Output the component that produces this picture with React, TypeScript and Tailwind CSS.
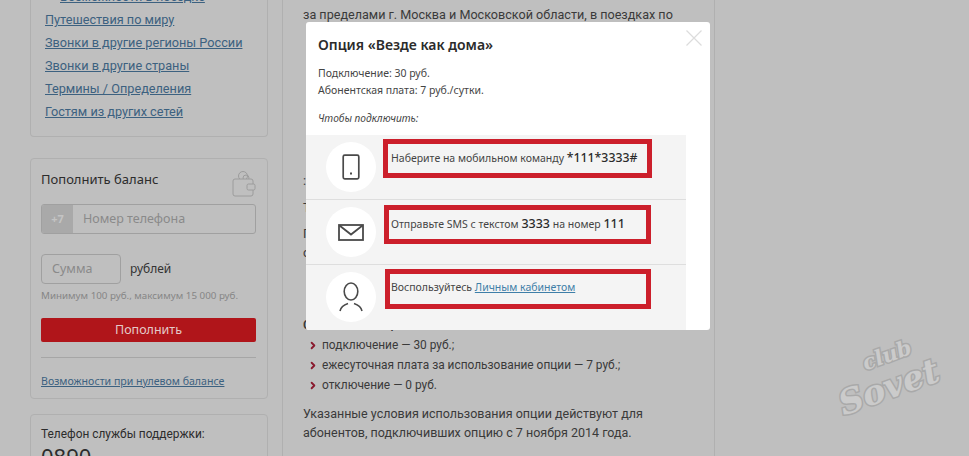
import { ChevronRight } from 'lucide-react';

const sideLinks = ['Путешествия по миру', 'Звонки в другие регионы России', 'Звонки в другие страны', 'Термины / Определения', 'Гостям из других сетей'];
const prices = ['подключение — 30 руб.;', 'ежесуточная плата за использование опции — 7 руб.;', 'отключение — 0 руб.'];

function WalletIcon() {
  return (
    <svg width="24" height="28" viewBox="0 0 24 28" fill="none" stroke="#9c9c9c" strokeWidth="1">
      <circle cx="11" cy="7" r="4.5" />
      <circle cx="14" cy="9" r="3" />
      <rect x="1" y="10" width="20" height="17" rx="2" fill="#bfbfbf" />
      <rect x="15" y="15" width="8" height="6" rx="1.5" fill="#bfbfbf" />
    </svg>
  );
}

function PhoneIcon() {
  return (
    <svg width="18" height="26" viewBox="0 0 18 26" fill="none">
      <rect x="1.2" y="1.2" width="15.6" height="23.6" rx="1.5" stroke="#4a4a4a" strokeWidth="1.7" />
      <rect x="8" y="18.5" width="2" height="2" fill="#4a4a4a" />
    </svg>
  );
}

function MailIcon() {
  return (
    <svg width="26" height="17" viewBox="0 0 26 17" fill="none" stroke="#4a4a4a" strokeWidth="1.8">
      <rect x="1" y="1" width="24" height="15" />
      <path d="M1.5 1.5 L13 10.5 L24.5 1.5" />
    </svg>
  );
}

function PersonIcon() {
  return (
    <svg width="24" height="30" viewBox="0 0 24 30" fill="none" stroke="#4a4a4a" strokeWidth="1.6">
      <ellipse cx="12" cy="9.5" rx="6.8" ry="8.5" />
      <path d="M1 29 C2 24 6 22.5 9 21.5 M23 29 C22 24 18 22.5 15 21.5" />
    </svg>
  );
}

export default function App() {
  return (
    <div className="relative flex h-[456px] w-[969px] overflow-hidden bg-[#bfbfbf] pl-[30px] font-['Noto_Sans',sans-serif] text-[#333]">
      {/* Sidebar */}
      <aside className="w-[238px] shrink-0">
        <div className="-mt-[15px] h-[152px] rounded-b-sm border border-t-0 border-[#b0b0b0] pl-[14px] font-['Roboto',sans-serif] text-[12.7px] leading-[23px] text-[#3c6180]">
          <a className="ml-[15px] block underline">Возможности в поездке</a>
          {sideLinks.map((link) => (
            <a key={link} className="block underline">{link}</a>
          ))}
        </div>

        <div className="mt-[21px] h-[241px] rounded-sm border border-[#b0b0b0] pt-[10px] pr-[11px] pl-[10px]">
          <div className="flex h-[35px] items-start justify-between">
            <span className="text-[13px] leading-[20px] text-[#2c2c2c]">Пополнить баланс</span>
            <WalletIcon />
          </div>
          <div className="flex h-[30px] overflow-hidden rounded-[3px] border border-[#a0a0a0] text-[12.5px] text-[#8a8a8a]">
            <span className="flex w-[31px] items-center justify-center bg-[#a9a9a9] text-[11px] font-bold text-[#c4c4c4]">+7</span>
            <span className="flex items-center pl-[10px]">Номер телефона</span>
          </div>
          <div className="mt-[20px] flex items-center">
            <span className="flex h-[30px] w-[80px] items-center rounded-[4px] border border-[#a0a0a0] pl-[10px] text-[12.5px] text-[#8a8a8a]">Сумма</span>
            <span className="ml-[9px] text-[12px] text-[#333]">рублей</span>
          </div>
          <p className="mt-[4px] text-[9.8px] leading-[16px] whitespace-nowrap text-[#868686]">Минимум 100 руб., максимум 15 000 руб.</p>
          <button className="mt-[14px] block h-[24px] w-full rounded-[2px] bg-[#b0151a] text-[12.5px] text-[#e4c9c9]">Пополнить</button>
          <div className="mt-[15px] border-t border-[#a6a6a6]" />
          <a className="mt-[15px] block text-[10.6px] leading-[16px] whitespace-nowrap text-[#3c6180] underline">Возможности при нулевом балансе</a>
        </div>

        <div className="mt-[15px] rounded-sm border border-[#b0b0b0] px-[10px] pt-[10px]">
          <p className="font-['Roboto',sans-serif] text-[11.9px] leading-[18px] text-[#2c2c2c]">Телефон службы поддержки:</p>
          <p className="text-[22px] leading-[26px] text-[#2c2c2c]">0890</p>
        </div>
      </aside>

      {/* Article */}
      <main className="ml-[14px] w-[433px] shrink-0 border-x border-[#b0b0b0] pl-[20px] font-['Roboto',sans-serif] text-[12.6px] leading-[19px] text-[#3a3a3a]">
        <p className="mt-[5px] whitespace-nowrap">за пределами г. Москва и Московской области, в поездках по</p>
        <p className="mt-[147px]">:</p>
        <p className="mt-[8px]">Тариф</p>
        <p className="mt-[7px]">При</p>
        <p>о</p>
        <p className="mt-[53px] font-semibold">Стоимость опции:</p>
        <ul className="mt-[1px] text-[11.9px] leading-[20px]">
          {prices.map((price) => (
            <li key={price} className="flex items-center">
              <ChevronRight size={11} strokeWidth={4} className="ml-[1px] w-[18px] shrink-0 text-[#8a1a2e]" />
              <span className="whitespace-nowrap">{price}</span>
            </li>
          ))}
        </ul>
        <p className="mt-[9px] text-[12.5px] whitespace-nowrap">Указанные условия использования опции действуют для</p>
        <p className="text-[12.5px] whitespace-nowrap">абонентов, подключивших опцию с 7 ноября 2014 года.</p>
      </main>

      {/* Modal */}
      <div className="absolute top-[22px] left-[306px] h-[308px] w-[404px] overflow-hidden rounded-[3px] bg-white text-[#444]">
        <svg className="absolute top-[8px] right-[8px]" width="16" height="16" viewBox="0 0 16 16" stroke="#dcdcdc" strokeWidth="1.2">
          <path d="M0.5 0.5 L15.5 15.5 M15.5 0.5 L0.5 15.5" />
        </svg>
        <h2 className="pt-[13px] pl-[12px] text-[14px] leading-[20px] font-semibold text-[#2b2b2b]">Опция «Везде как дома»</h2>
        <p className="mt-[10px] pl-[12px] text-[10.5px] leading-[17px]">Подключение: 30 руб.</p>
        <p className="pl-[12px] text-[10.5px] leading-[17px]">Абонентская плата: 7 руб./сутки.</p>
        <p className="mt-[11px] pl-[12px] text-[10.2px] leading-[17px] italic">Чтобы подключить:</p>

        <div className="mt-[8px] w-[380px] bg-[#f4f4f4]">
          <div className="flex h-[65px] border-b border-[#dedede] pt-[4px]">
            <span className="mt-[3px] ml-[20px] flex h-[50px] w-[50px] items-center justify-center rounded-full bg-white"><PhoneIcon /></span>
            <div className="ml-[7px] flex h-[39px] w-[269px] items-center border-[5px] border-[#cc1f2b] pl-[3px] text-[10.5px] whitespace-nowrap">
              Наберите на мобильном команду&nbsp;<span className="text-[12.3px] font-medium text-[#2b2b2b]">*111*3333#</span>
            </div>
          </div>
          <div className="flex h-[65px] border-b border-[#dedede] pt-[5px]">
            <span className="mt-[2px] ml-[20px] flex h-[50px] w-[50px] items-center justify-center rounded-full bg-white"><MailIcon /></span>
            <div className="ml-[8px] flex h-[39px] w-[267px] items-center border-[5px] border-[#cc1f2b] pl-[2px] text-[10.5px] whitespace-nowrap">
              Отправьте SMS с текстом&nbsp;<span className="text-[12.5px] font-medium text-[#2b2b2b]">3333</span>&nbsp;на номер&nbsp;<span className="text-[12.5px] font-medium text-[#2b2b2b]">111</span>
            </div>
          </div>
          <div className="flex h-[65px] pt-[4px]">
            <span className="mt-[3px] ml-[20px] flex h-[50px] w-[50px] items-center justify-center rounded-full bg-white"><PersonIcon /></span>
            <div className="ml-[9px] h-[40px] w-[266px] border-[5px] border-[#cc1f2b] pt-[6px] pl-[1px] text-[10.5px] leading-[15px] whitespace-nowrap">
              Воспользуйтесь <a className="text-[#3f7fa8] underline">Личным кабинетом</a>
            </div>
          </div>
        </div>
      </div>

      {/* Watermark */}
      <div className="absolute top-[353px] left-[834px] -rotate-[20deg] font-['DejaVu_Serif',serif] font-bold text-[#cbcbcb] italic [-webkit-text-stroke:3px_#a9a9a9] [paint-order:stroke_fill]">
        <span className="absolute -top-[8px] left-[36px] text-[21px] leading-[24px]">club</span>
        <span className="block pt-[14px] text-[34px] leading-[40px]">Sovet</span>
      </div>
    </div>
  );
}
